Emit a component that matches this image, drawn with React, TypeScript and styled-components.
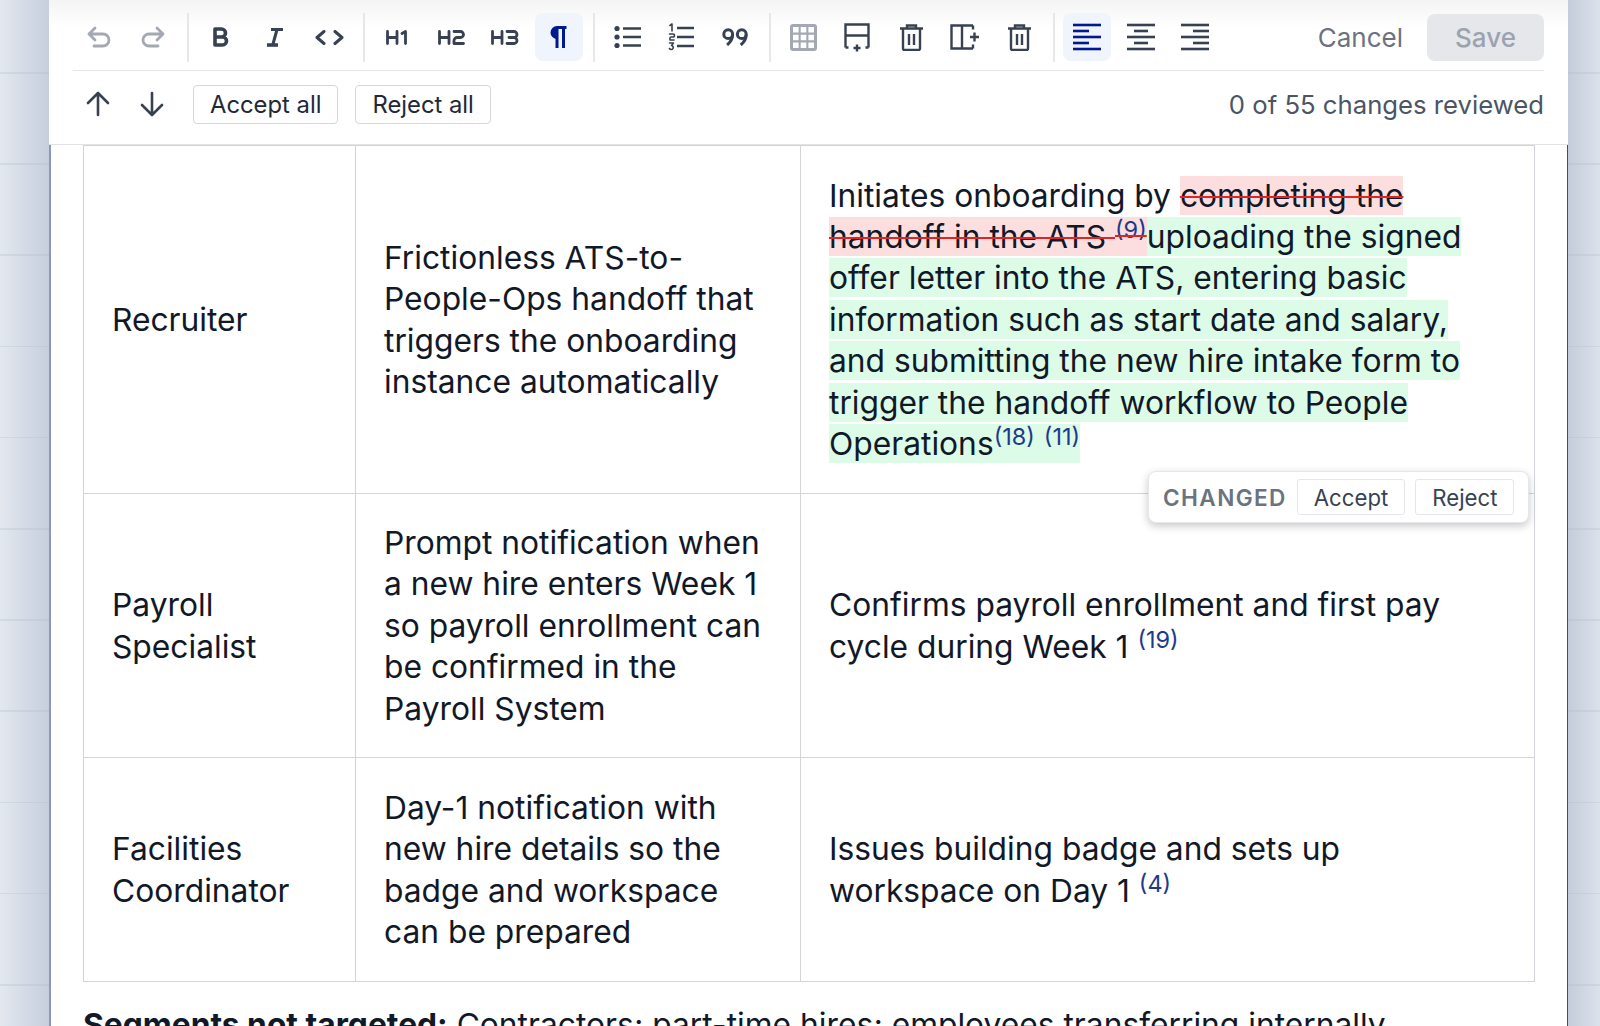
import styled, { createGlobalStyle } from "styled-components";

const GlobalStyle = createGlobalStyle`
  html, body {
    margin: 0;
    height: 1026px;
    overflow: hidden;
    background: #e2e7ef;
  }
  #root {
    height: 1026px;
    overflow: hidden;
  }
`;

const Page = styled.div`
  height: 1026px;
  padding: 0 32px 0 49px;
  box-sizing: border-box;
  overflow: hidden;
  font-family: Inter, "Liberation Sans", sans-serif;
  color: #111827;
  background-color: #e3e8f0;
  background-image:
    linear-gradient(90deg, rgba(170, 182, 200, 0) 0, rgba(170, 182, 200, 0.5) 49px, transparent 49px, transparent 1568px, rgba(170, 182, 200, 0.55) 1568px, rgba(170, 182, 200, 0.12) 100%),
    repeating-linear-gradient(180deg, transparent 0, transparent 72px, rgba(150, 165, 185, 0.2) 72px, rgba(150, 165, 185, 0.2) 73.5px, transparent 73.5px, transparent 91.2px);
`;

const Sheet = styled.div`
  width: 1519px;
  height: 1026px;
  background: #fff;
`;

const Toolbar = styled.div`
  height: 145px;
  box-sizing: border-box;
  padding: 0 24px;
  background: linear-gradient(180deg, #f4f4f5 0, #fff 28px);
  border-bottom: 1px solid #e1e3e7;
`;

const ToolRow = styled.div`
  height: 71px;
  padding: 13px 0 0 2px;
  box-sizing: border-box;
  display: flex;
  align-items: flex-start;
  border-bottom: 1.5px solid #e5e7eb;
`;

const ReviewRow = styled.div`
  height: 66px;
  padding-left: 1px;
  display: flex;
  align-items: center;
`;

const ToolButton = styled.div<{ $active?: boolean; $faded?: boolean }>`
  width: 48px;
  height: 48px;
  margin-right: 6px;
  flex: none;
  display: flex;
  align-items: center;
  justify-content: center;
  border-radius: 8px;
  color: ${(p) => (p.$active ? "#00198f" : p.$faded ? "#a3a8b3" : "#374151")};
  background: ${(p) => (p.$active ? "#eff4fd" : "transparent")};
`;

const Divider = styled.div`
  width: 2px;
  height: 49px;
  margin: 0 8px 0 4px;
  flex: none;
  background: #e5e7eb;
`;

const Spacer = styled.div`
  flex: 1;
`;

const CancelLabel = styled.div`
  height: 48px;
  margin-right: 24px;
  display: flex;
  align-items: center;
  font-size: 26px;
  color: #6b7280;
`;

const SaveButton = styled.div`
  width: 117px;
  height: 47px;
  margin-top: 1px;
  display: flex;
  align-items: center;
  justify-content: center;
  border-radius: 8px;
  background: #e5e7eb;
  color: #9ca3af;
  font-size: 26px;
  font-weight: 500;
`;

const ArrowGroup = styled.div`
  display: flex;
  margin-right: 11px;
`;

const OutlineButton = styled.div`
  height: 37px;
  padding: 0 16px;
  margin-right: 17px;
  display: flex;
  align-items: center;
  border: 1px solid #d4d7dd;
  border-radius: 4px;
  background: #fff;
  font-size: 23.8px;
  color: #1f2937;
`;

const ReviewCount = styled.div`
  font-size: 25.7px;
  color: #4b5563;
`;

const Body = styled.div`
  height: 881px;
  padding: 0 33px 0 32px;
  box-sizing: border-box;
  position: relative;
  border-left: 2px solid #8d96bd;
  border-right: 1px solid #3f4a86;
`;

const Table = styled.table`
  width: 1451px;
  table-layout: fixed;
  border-collapse: collapse;
  font-size: 31.75px;
  line-height: 41.4px;
  color: #111827;
`;

const Cell = styled.td<{ $height?: number }>`
  padding: 0 28px;
  box-sizing: border-box;
  border: 1.5px solid #d1d5db;
  height: ${(p) => p.$height}px;
  vertical-align: middle;
`;

const Removed = styled.span`
  background: #fddede;
  text-decoration: line-through;
  text-decoration-color: #e02424;
  text-decoration-thickness: 2px;
`;

const Added = styled.span`
  background: #dcfce7;
`;

const Ref = styled.sup`
  font-size: 23.5px;
  line-height: 0;
  vertical-align: 10px;
  color: #1e3a8a;
`;

const ChangePopover = styled.div`
  position: absolute;
  top: 326px;
  left: 1097px;
  height: 52px;
  padding: 0 14px;
  box-sizing: border-box;
  display: flex;
  align-items: center;
  gap: 10px;
  border: 1px solid #e5e7eb;
  border-radius: 8px;
  background: #fff;
  box-shadow: 0 3px 8px rgba(0, 0, 0, 0.22);
`;

const ChangeLabel = styled.span`
  font-size: 22.6px;
  font-weight: 600;
  letter-spacing: 1.4px;
  color: #6b7280;
`;

const PopoverButton = styled.div`
  height: 34px;
  padding: 0 16px;
  display: flex;
  align-items: center;
  border: 1px solid #e5e7eb;
  border-radius: 3px;
  font-size: 22.2px;
  color: #374151;
`;

const Note = styled.p`
  margin: 22px 0 0;
  font-size: 31.75px;
  line-height: 41.4px;
  white-space: nowrap;
`;

const stroke = { fill: "none", stroke: "currentColor", strokeLinecap: "round", strokeLinejoin: "round" } as const;

const Undo = () => (
  <svg width="24" height="22" viewBox="0 0 24 22" {...stroke} strokeWidth="2.8">
    <path d="M8 2 2 8l6 6M2 8h14a6 6 0 0 1 0 12H7" />
  </svg>
);

const Redo = () => (
  <svg width="24" height="22" viewBox="0 0 24 22" {...stroke} strokeWidth="2.8">
    <path d="M16 2l6 6-6 6M22 8H8a6 6 0 0 0 0 12h9" />
  </svg>
);

const BoldIcon = () => (
  <svg width="16" height="20" viewBox="0 0 16 20" {...stroke} strokeWidth="3.6">
    <path d="M2 2h6.5a4 4 0 0 1 0 8H2zM2 10h7.5a4 4 0 0 1 0 8H2z" />
  </svg>
);

const ItalicIcon = () => (
  <svg width="18" height="20" viewBox="0 0 18 20" fill="none" stroke="currentColor">
    <path d="M5 2.5h12M11 2.5 7 17" strokeWidth="3" />
    <path d="M1 18h11" strokeWidth="3.6" />
  </svg>
);

const CodeIcon = () => (
  <svg width="29" height="15" viewBox="0 0 29 15" {...stroke} strokeWidth="3">
    <path d="M9 1.5 2 7.5l7 6M20 1.5l7 6-7 6" />
  </svg>
);

const H1 = () => (
  <svg width="22" height="15" viewBox="0 0 22 15" {...stroke} strokeWidth="2.8">
    <path d="M1.5 1.5v12M11 1.5v12M1.5 7.5H11M16 3.5l3.5-2v12" />
  </svg>
);

const H2 = () => (
  <svg width="27" height="15" viewBox="0 0 27 15" {...stroke} strokeWidth="2.8">
    <path d="M1.5 1.5v12M11 1.5v12M1.5 7.5H11M16 1.5h6.5a3 3 0 0 1 0 6H19a3 3 0 0 0-3 3v3h9.5" />
  </svg>
);

const H3 = () => (
  <svg width="28" height="15" viewBox="0 0 28 15" {...stroke} strokeWidth="2.8">
    <path d="M1.5 1.5v12M11 1.5v12M1.5 7.5H11M16 1.5h7a3 3 0 0 1 0 6h-5 5a3 3 0 0 1 0 6h-7" />
  </svg>
);

const Pilcrow = () => (
  <svg width="24" height="24" viewBox="0 0 24 24" fill="none">
    <path d="M10 1h9.5v3H10v10a6.5 6.5 0 0 1 0-13z" fill="currentColor" />
    <path d="M10 2v21M16.5 2v21" stroke="currentColor" strokeWidth="3" />
  </svg>
);

const BulletList = () => (
  <svg width="27" height="24" viewBox="0 0 27 24" fill="none" stroke="currentColor">
    <circle cx="3" cy="3.5" r="2.6" fill="currentColor" stroke="none" />
    <circle cx="3" cy="12" r="2.6" fill="currentColor" stroke="none" />
    <circle cx="3" cy="20.5" r="2.6" fill="currentColor" stroke="none" />
    <path d="M9 3.5h18M9 12h18M9 20.5h18" strokeWidth="2.4" />
  </svg>
);

const NumberList = () => (
  <svg width="27" height="28" viewBox="0 0 27 28" {...stroke} strokeWidth="1.6">
    <path d="M2 2.5 4 1v7M1.5 11h3.5a1 1 0 0 1 0 3H3a1 1 0 0 0-1 1v2h4M1.5 20h4l-2 2.5a2 2 0 1 1-2 3" />
    <path d="M9 5h17M9 14h17M9 23h17" strokeWidth="2.4" strokeLinecap="butt" />
  </svg>
);

const Quote = () => (
  <svg width="26" height="18" viewBox="0 0 26 18" fill="none" stroke="currentColor" strokeWidth="3">
    <circle cx="6.2" cy="6.2" r="4.4" />
    <path d="M10.6 6.5c0 4-2.5 8-5.5 10.5" />
    <circle cx="19.8" cy="6.2" r="4.4" />
    <path d="M24.2 6.5c0 4-2.5 8-5.5 10.5" />
  </svg>
);

const TableIcon = () => (
  <svg width="27" height="27" viewBox="0 0 27 27" fill="none">
    <rect x="0" y="0" width="27" height="27" rx="3" fill="currentColor" />
    <path d="M3 3h5.6v5.6H3zM10.7 3h5.6v5.6h-5.6zM18.4 3H24v5.6h-5.6zM3 10.7h5.6v5.6H3zM10.7 10.7h5.6v5.6h-5.6zM18.4 10.7H24v5.6h-5.6zM3 18.4h5.6V24H3zM10.7 18.4h5.6V24h-5.6zM18.4 18.4H24V24h-5.6z" fill="#fff" />
  </svg>
);

const RowAdd = () => (
  <svg width="26" height="29" viewBox="0 0 26 29" fill="none" stroke="currentColor" strokeWidth="2.4">
    <path d="M1.5 24.5V1.5h23v23M1.5 12.5h23M1.5 24.5h3M24.5 24.5h-3M13 21.5v7M9.5 25h7" />
  </svg>
);

const ColAdd = () => (
  <svg width="30" height="26" viewBox="0 0 30 26" fill="none" stroke="currentColor" strokeWidth="2.4">
    <path d="M23 1.5H1.5v23H23M12 1.5v23M23 1.5v4M23 24.5v-4M20 13h9M24.5 8.5v9" />
  </svg>
);

const Trash = () => (
  <svg width="23" height="27" viewBox="0 0 23 27" fill="none" stroke="currentColor" strokeWidth="2.4">
    <path d="M0 4.5h23M7 4V1.5h9V4M3 5v19.5A1.5 1.5 0 0 0 4.5 26h14a1.5 1.5 0 0 0 1.5-1.5V5M9 10v11M14 10v11" />
  </svg>
);

const AlignLines = ({ rows }: { rows: [number, number][] }) => (
  <svg width="28" height="28" viewBox="0 0 28 28" fill="none" stroke="currentColor" strokeWidth="2.6">
    {rows.map(([from, to], i) => (
      <path key={i} d={`M${from} ${2 + i * 6}H${to}`} />
    ))}
  </svg>
);

const ArrowUp = () => (
  <svg width="24" height="26" viewBox="0 0 24 26" {...stroke} strokeWidth="2.6">
    <path d="M12 2v22M2 12 12 2l10 10" />
  </svg>
);

const ArrowDown = () => (
  <svg width="24" height="26" viewBox="0 0 24 26" {...stroke} strokeWidth="2.6">
    <path d="M12 24V2M2 14l10 10 10-10" />
  </svg>
);

function App() {
  return (
    <Page>
      <GlobalStyle />
      <Sheet>
        <Toolbar>
          <ToolRow>
            <ToolButton $faded><Undo /></ToolButton>
            <ToolButton $faded><Redo /></ToolButton>
            <Divider />
            <ToolButton><BoldIcon /></ToolButton>
            <ToolButton><ItalicIcon /></ToolButton>
            <ToolButton><CodeIcon /></ToolButton>
            <Divider />
            <ToolButton><H1 /></ToolButton>
            <ToolButton><H2 /></ToolButton>
            <ToolButton><H3 /></ToolButton>
            <ToolButton $active><Pilcrow /></ToolButton>
            <Divider />
            <ToolButton><BulletList /></ToolButton>
            <ToolButton><NumberList /></ToolButton>
            <ToolButton><Quote /></ToolButton>
            <Divider />
            <ToolButton $faded><TableIcon /></ToolButton>
            <ToolButton><RowAdd /></ToolButton>
            <ToolButton><Trash /></ToolButton>
            <ToolButton><ColAdd /></ToolButton>
            <ToolButton><Trash /></ToolButton>
            <Divider />
            <ToolButton $active><AlignLines rows={[[0, 28], [0, 16], [0, 28], [0, 16], [0, 28]]} /></ToolButton>
            <ToolButton><AlignLines rows={[[0, 28], [7, 21], [0, 28], [7, 21], [0, 28]]} /></ToolButton>
            <ToolButton><AlignLines rows={[[0, 28], [12, 28], [0, 28], [12, 28], [0, 28]]} /></ToolButton>
            <Spacer />
            <CancelLabel>Cancel</CancelLabel>
            <SaveButton>Save</SaveButton>
          </ToolRow>
          <ReviewRow>
            <ArrowGroup>
              <ToolButton><ArrowUp /></ToolButton>
              <ToolButton><ArrowDown /></ToolButton>
            </ArrowGroup>
            <OutlineButton>Accept all</OutlineButton>
            <OutlineButton>Reject all</OutlineButton>
            <Spacer />
            <ReviewCount>0 of 55 changes reviewed</ReviewCount>
          </ReviewRow>
        </Toolbar>
        <Body>
          <Table>
            <colgroup>
              <col width="272" />
              <col width="445" />
              <col width="734" />
            </colgroup>
            <tbody>
              <tr>
                <Cell $height={348}>Recruiter</Cell>
                <Cell>Frictionless ATS-to-People-Ops handoff that triggers the onboarding instance automatically</Cell>
                <Cell>
                  Initiates onboarding by <Removed>completing the handoff in the ATS <Ref>(9)</Ref></Removed>
                  <Added>uploading the signed offer letter into the ATS, entering basic information such as start date and salary, and submitting the new hire intake form to trigger the handoff workflow to People Operations<Ref>(18)</Ref> <Ref>(11)</Ref></Added>
                </Cell>
              </tr>
              <tr>
                <Cell $height={264}>Payroll Specialist</Cell>
                <Cell>Prompt notification when a new hire enters Week 1 so payroll enrollment can be confirmed in the Payroll System</Cell>
                <Cell>Confirms payroll enrollment and first pay cycle during Week 1 <Ref>(19)</Ref></Cell>
              </tr>
              <tr>
                <Cell $height={224}>Facilities Coordinator</Cell>
                <Cell>Day-1 notification with new hire details so the badge and workspace can be prepared</Cell>
                <Cell>Issues building badge and sets up workspace on Day 1 <Ref>(4)</Ref></Cell>
              </tr>
            </tbody>
          </Table>
          <ChangePopover>
            <ChangeLabel>CHANGED</ChangeLabel>
            <PopoverButton>Accept</PopoverButton>
            <PopoverButton>Reject</PopoverButton>
          </ChangePopover>
          <Note><strong>Segments not targeted:</strong> Contractors; part-time hires; employees transferring internally</Note>
        </Body>
      </Sheet>
    </Page>
  );
}

export default App;
